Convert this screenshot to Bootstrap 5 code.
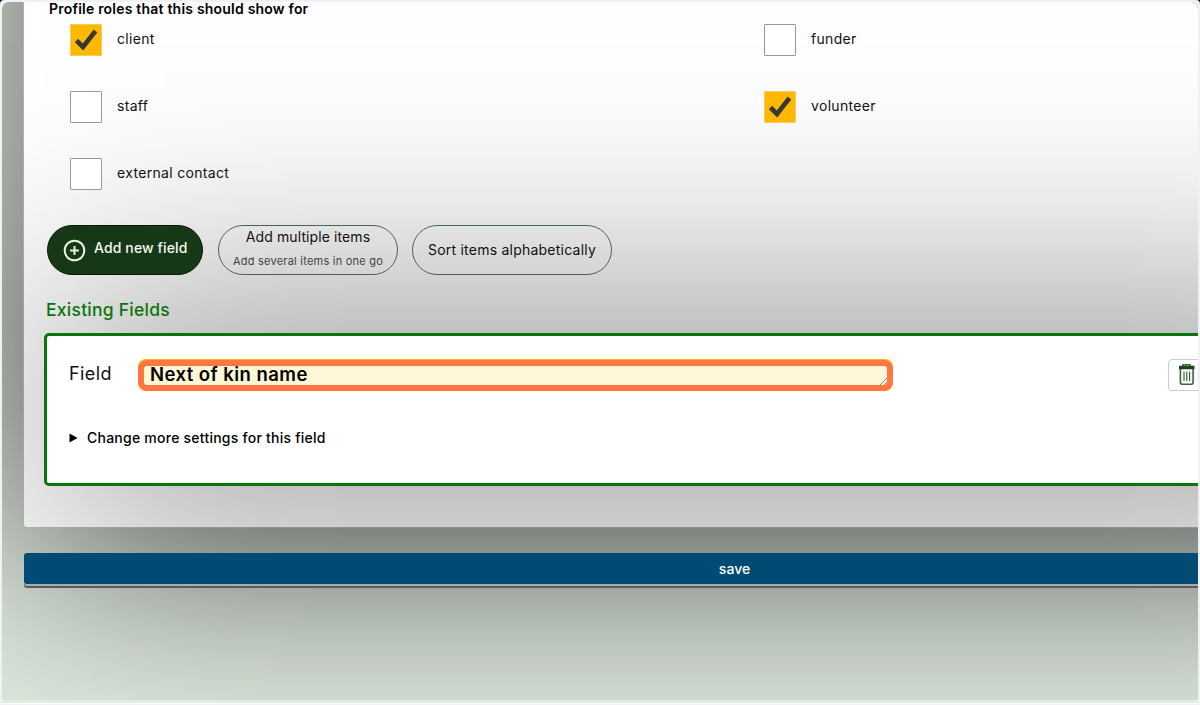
<!DOCTYPE html>
<html lang="en">
<head>
<meta charset="utf-8">
<meta name="viewport" content="width=device-width, initial-scale=1">
<title>Profile fields</title>
<link href="https://cdn.jsdelivr.net/npm/bootstrap@5.3.0/dist/css/bootstrap.min.css" rel="stylesheet">
<style>
  html { background: #000; }
  body { height: 705px; background: #f1f0f6; border-radius: 4px 4px 0 0; padding: 2px 2px 0; overflow: hidden; font-family: Inter, "Liberation Sans", sans-serif; font-size: 14px; line-height: 20px; color: #111; }
  .app-frame { height: 701px; background: #e1ebe0; border-radius: 7px 7px 0 0; border-bottom: 3px solid #e3ece1; box-shadow: 0 1px 0 #fff; position: relative; isolation: isolate; }
  /* very wide soft shadows of the panel (before) and of the field card (after) */
  .app-frame::before, .app-frame::after { content: ""; position: absolute; inset: 0; pointer-events: none; }
  .app-frame::before {
    z-index: -1;
    background: linear-gradient(rgba(0,0,0,.605) 0, rgba(0,0,0,.605) 100px, rgba(0,0,0,.6) 200px, rgba(0,0,0,.585) 300px, rgba(0,0,0,.556) 350px, rgba(0,0,0,.51) 400px, rgba(0,0,0,.478) 425px, rgba(0,0,0,.44) 450px, rgba(0,0,0,.397) 475px, rgba(0,0,0,.351) 500px, rgba(0,0,0,.303) 525px, rgba(0,0,0,.255) 550px, rgba(0,0,0,.209) 575px, rgba(0,0,0,.166) 600px, rgba(0,0,0,.128) 625px, rgba(0,0,0,.096) 650px, rgba(0,0,0,.07) 675px, rgba(0,0,0,.049) 700px);
    -webkit-mask-image: linear-gradient(90deg, rgba(0,0,0,.433) 0, rgba(0,0,0,.5) 21px, rgba(0,0,0,.579) 46px, rgba(0,0,0,.655) 71px, rgba(0,0,0,.726) 96px, rgba(0,0,0,.788) 121px, rgba(0,0,0,.841) 146px, rgba(0,0,0,.885) 171px, rgba(0,0,0,.919) 196px, rgba(0,0,0,.945) 221px, rgba(0,0,0,.977) 271px, rgba(0,0,0,.992) 321px, #000 371px, #000 1048px, rgba(0,0,0,.992) 1123px, rgba(0,0,0,.97) 1196px);
  }
  .app-frame::after {
    background: linear-gradient(rgba(0,0,0,.0023) 0, rgba(0,0,0,.005) 31px, rgba(0,0,0,.0084) 56px, rgba(0,0,0,.0137) 81px, rgba(0,0,0,.0213) 106px, rgba(0,0,0,.0322) 131px, rgba(0,0,0,.047) 156px, rgba(0,0,0,.066) 181px, rgba(0,0,0,.0895) 206px, rgba(0,0,0,.1171) 231px, rgba(0,0,0,.1477) 256px, rgba(0,0,0,.1798) 281px, rgba(0,0,0,.2112) 306px, rgba(0,0,0,.2395) 331px, rgba(0,0,0,.28) 407px, rgba(0,0,0,.2395) 484px, rgba(0,0,0,.2112) 509px, rgba(0,0,0,.1798) 534px, rgba(0,0,0,.1477) 559px, rgba(0,0,0,.1171) 584px, rgba(0,0,0,.0895) 609px, rgba(0,0,0,.066) 634px, rgba(0,0,0,.047) 659px, rgba(0,0,0,.0322) 684px, rgba(0,0,0,.025) 698px);
    -webkit-mask-image: linear-gradient(90deg, rgba(0,0,0,.368) 0, rgba(0,0,0,.5) 42px, rgba(0,0,0,.579) 67px, rgba(0,0,0,.655) 92px, rgba(0,0,0,.726) 117px, rgba(0,0,0,.788) 142px, rgba(0,0,0,.841) 167px, rgba(0,0,0,.885) 192px, rgba(0,0,0,.919) 217px, rgba(0,0,0,.945) 242px, rgba(0,0,0,.977) 292px, rgba(0,0,0,.992) 342px, #000 392px, #000 1048px, rgba(0,0,0,.992) 1123px, rgba(0,0,0,.965) 1196px);
  }
  .wide { width: 1421px; margin-left: 22px; }
  .panel { padding: 0 20px; height: 525px; background: #fff; box-shadow: 0 0 0 1px rgba(190,190,190,.6); border-radius: 0 0 3px 3px; }
  .above { position: relative; z-index: 1; }
  .title { height: 22px; line-height: 13px; padding-left: 5px; font-weight: 600; letter-spacing: .21px; white-space: nowrap; }
  .roles { width: 1414px; padding-left: 26px; height: 201px; }
  .role { height: 67px; gap: 15px; }
  .role .form-check-input { width: 32px; height: 32px; margin: 0; border: 1px solid #999; border-radius: 1px; background-color: #fff; flex: none; }
  .role .form-check-input:checked { border-color: #f5cb62; background-color: #ffb800; background-size: 32px; background-image: url("data:image/svg+xml,%3Csvg xmlns='http://www.w3.org/2000/svg' viewBox='0 0 32 32'%3E%3Cpath d='M6.5 16.5L13 23L25.5 7' fill='none' stroke='%23383838' stroke-width='4.6'/%3E%3C/svg%3E"); }
  .role label { line-height: 30px; letter-spacing: .32px; }
  .pill { height: 50px; border-radius: 25px; border: 1px solid #4a664d; color: #111; padding: 0; font-size: 14px; line-height: 20px; letter-spacing: .1px; white-space: nowrap; }
  .pill-main { width: 156px; padding-left: 15px; background: #173817; border-color: #051c05; color: #f4faf0; font-weight: 500; letter-spacing: .12px; }
  .pill-multi { width: 180px; margin-left: 15px; padding-top: 1px; }
  .pill-sort { width: 200px; margin-left: 14px; letter-spacing: .23px; }
  .tools { margin-left: 3px; }
  .sub { font-size: 11px; line-height: 16px; color: #444; letter-spacing: .23px; margin-top: 6px; }
  .section { color: #0b750b; font-size: 17.5px; font-weight: 500; letter-spacing: .25px; line-height: 22px; margin: 24px 0 12px 2px; }
  .field-card { height: 153px; border: 3px solid #0a750a; border-radius: 5px; background: #fff; padding: 23px 22px; }
  .field-label { width: 69px; font-size: 18px; line-height: 30px; letter-spacing: .4px; }
  .field-wrap { width: 755px; height: 32px; background: #ffb800; border-radius: 8px; }
  .field-input { width: 755px; height: 31px; margin-top: 1px; border: 6px solid #ff7643; border-radius: 9px; background: #fdf7d5; padding: 0 6px; font-size: 18.5px; letter-spacing: .45px; line-height: 16px; font-weight: 600; color: #000; }
  .grip { margin-right: -6px; }
  .trash { width: 38px; height: 32px; border: 1px solid #ccc; border-radius: 4px; margin-left: 275px; padding: 3px 0 0 9px; }
  .more { margin-top: 37px; font-weight: 500; color: #000; gap: 9px; letter-spacing: .24px; }
  .save { height: 31px; margin-top: 26px; border: 0; border-radius: 3px; background: #004b73; color: #fff; font-size: 14px; font-weight: 500; line-height: 30px; padding: 0; box-shadow: 0 2px 0 #aaa9b0, 0 4px 0 #5c5a5c; }
</style>
</head>
<body>
<main class="app-frame overflow-hidden">
  <section class="wide panel">
    <div class="title above text-black">Profile roles that this should show for</div>
    <div class="roles above row row-cols-2 g-0 align-content-start">
      <div class="col role d-flex"><input class="form-check-input" type="checkbox" id="client" checked><label for="client">client</label></div>
      <div class="col role d-flex"><input class="form-check-input" type="checkbox" id="funder"><label for="funder">funder</label></div>
      <div class="col role d-flex"><input class="form-check-input" type="checkbox" id="staff"><label for="staff">staff</label></div>
      <div class="col role d-flex"><input class="form-check-input" type="checkbox" id="volunteer" checked><label for="volunteer">volunteer</label></div>
      <div class="col role d-flex"><input class="form-check-input" type="checkbox" id="external"><label for="external">external contact</label></div>
    </div>
    <div class="tools above d-flex">
      <button class="btn pill pill-main d-flex align-items-center"><svg width="23" height="23" viewBox="0 0 23 23" fill="none" stroke="#eaf0e0" stroke-width="2"><circle cx="11.5" cy="11.5" r="9.8"/><path d="M11.5 7v9M7 11.5h9"/></svg><span class="ms-2 mb-1">Add new field</span></button>
      <button class="btn pill pill-multi d-flex flex-column align-items-center"><span>Add multiple items</span><span class="sub">Add several items in one go</span></button>
      <button class="btn pill pill-sort">Sort items alphabetically</button>
    </div>
    <h2 class="section above">Existing Fields</h2>
    <div class="field-card above">
      <div class="d-flex">
        <label class="field-label flex-shrink-0" for="field">Field</label>
        <div class="field-wrap flex-shrink-0"><div class="field-input d-flex justify-content-between" id="field"><span>Next of kin name</span><svg class="grip align-self-end" width="7" height="7" viewBox="0 0 7 7" stroke="#666" stroke-width=".8"><path d="M0 7L7 0M4 7L7 4"/></svg></div></div>
        <div class="trash flex-shrink-0"><svg width="18" height="23" viewBox="0 0 18 23" fill="none" stroke="#3c623e" stroke-width="1.6"><path d="M5 3V1.8h7V3" /><path d="M1 4.5h15.5" stroke="#1d451f" stroke-width="3.6"/><path d="M2.4 6V19.2q0 2 2 2h8.7q2 0 2-2V6"/><path d="M6 8.5v9.5M8.8 8.5v9.5M11.6 8.5v9.5" stroke-width="1.2"/></svg></div>
      </div>
      <div class="more d-flex align-items-center"><svg width="9" height="10" viewBox="0 0 9 10"><path d="M0.5 .5L8.5 5L.5 9.5z"/></svg><span>Change more settings for this field</span></div>
    </div>
  </section>
  <button class="wide save above d-block">save</button>
</main>
<script src="https://cdn.jsdelivr.net/npm/bootstrap@5.3.0/dist/js/bootstrap.bundle.min.js"></script>
</body>
</html>
